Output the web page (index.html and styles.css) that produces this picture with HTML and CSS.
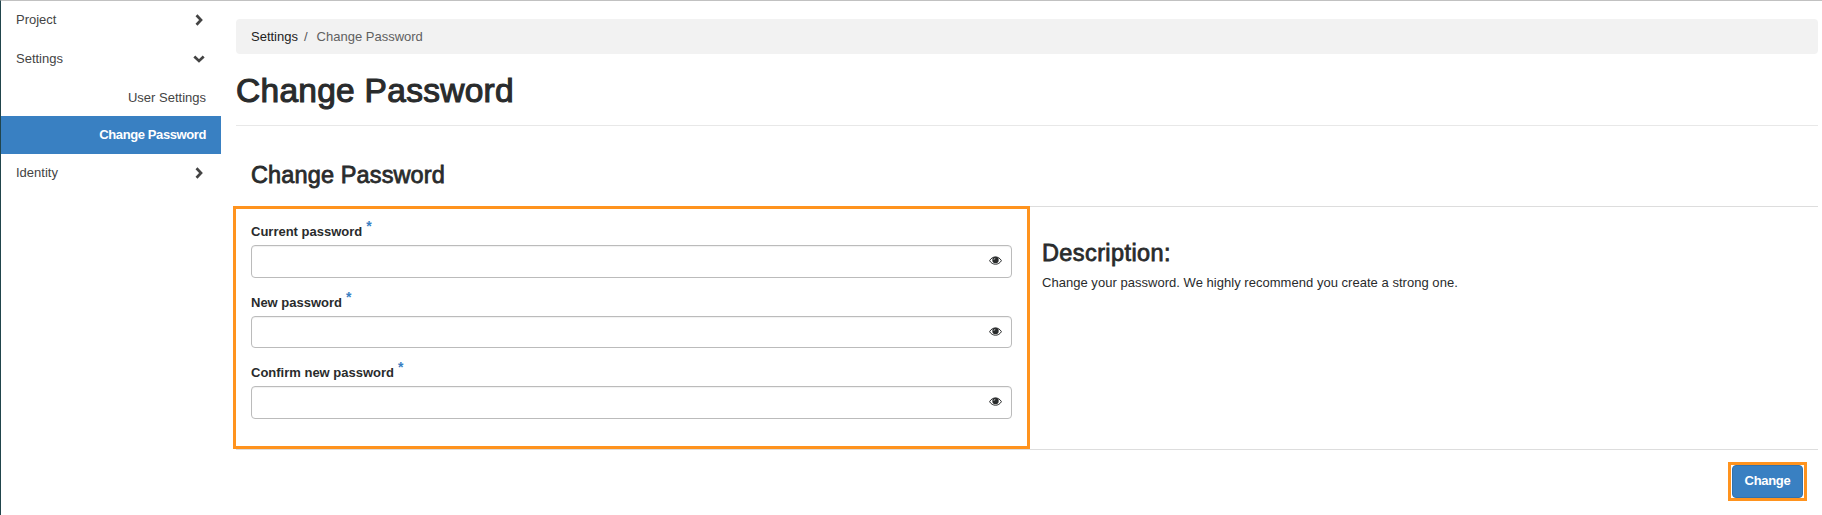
FILE: index.html
```html
<!DOCTYPE html>
<html lang="en">
<head>
<meta charset="utf-8">
<title>Change Password</title>
<link rel="stylesheet" href="styles.css">
</head>
<body>
<svg class="defs" aria-hidden="true">
  <symbol id="chevron" viewBox="0 0 8 12"><path d="M1.5 1.3 6 6 1.5 10.7" fill="none" stroke="currentColor" stroke-width="2.7"/></symbol>
  <symbol id="eye" viewBox="0 0 13 9"><path d="M.6 4.7C3.2-.3 9.8-.3 12.4 4.7 9.8 9.4 3.2 9.4 .6 4.7Z" fill="none" stroke="currentColor"/><circle cx="6.5" cy="4" r="3.2" fill="currentColor"/><path d="M4.9 3.8Q5 2.4 6.3 2.3" fill="none" stroke="#fff" stroke-width=".6"/></symbol>
</svg>
<div class="app">
  <nav class="sidebar">
    <a class="group">Project<svg class="chevron"><use href="#chevron"/></svg></a>
    <a class="group">Settings<svg class="chevron open"><use href="#chevron"/></svg></a>
    <a class="item">User Settings</a>
    <a class="item active">Change Password</a>
    <a class="group last">Identity<svg class="chevron"><use href="#chevron"/></svg></a>
  </nav>
  <main class="content">
    <div class="breadcrumb"><span>Settings</span><span class="slash">/</span><span class="current">Change Password</span></div>
    <h1 class="page-title">Change Password</h1>
    <h2 class="form-title">Change Password</h2>
    <div class="form-body">
      <form class="fields">
        <label class="label">Current password<span class="required">*</span></label>
        <div class="input"><svg class="eye"><use href="#eye"/></svg></div>
        <label class="label">New password<span class="required">*</span></label>
        <div class="input short"><svg class="eye"><use href="#eye"/></svg></div>
        <label class="label">Confirm new password<span class="required">*</span></label>
        <div class="input"><svg class="eye"><use href="#eye"/></svg></div>
      </form>
      <section class="description">
        <h3 class="description-title">Description:</h3>
        <p class="description-text">Change your password. We highly recommend you create a strong one.</p>
      </section>
    </div>
    <div class="footer"><div class="highlight"><button class="button">Change</button></div></div>
  </main>
</div>
</body>
</html>
```
FILE: styles.css
```css
* { box-sizing: border-box; }
body {
  margin: 0;
  background: #fff;
  color: #292b2c;
  font: 13px/18px "Liberation Sans", Arial, sans-serif;
  overflow: hidden;
}
h1, h2, h3, p { margin: 0; }
.defs { position: absolute; width: 0; height: 0; }
.app {
  display: flex;
  height: 515px;
  border-top: 1px solid #c1c1c1;
  border-left: 1px solid #21454c;
}
.sidebar { width: 220px; flex: none; color: #444; }
.group {
  display: flex;
  align-items: center;
  justify-content: space-between;
  height: 39px;
  padding: 0 18px 2px 15px;
}
.group.last { height: 37px; padding-bottom: 0; }
.item {
  display: flex;
  align-items: center;
  justify-content: flex-end;
  height: 37px;
  padding-right: 15px;
}
.item.active {
  height: 38px;
  background: #3980c2;
  color: #fff;
  font-weight: bold;
  letter-spacing: -.4px;
}
.chevron { width: 8px; height: 12px; margin-top: 1px; }
.chevron.open { transform: rotate(90deg); }
.content { width: 1582px; margin-left: 15px; padding-top: 18px; }
.breadcrumb {
  display: flex;
  height: 35px;
  padding: 9px 15px;
  border-radius: 4px;
  background: #f2f2f2;
  color: #222;
}
.slash { margin: 0 9px 0 6px; color: #555; }
.current { color: #606060; }
.page-title {
  height: 72px;
  padding-top: 17px;
  border-bottom: 1px solid #e8e8e8;
  font-size: 33.5px;
  line-height: 40px;
  font-weight: 400;
  letter-spacing: .28px;
  -webkit-text-stroke: 1.1px currentColor;
}
.form-title {
  height: 80px;
  padding: 35px 15px 0;
  font-size: 23.5px;
  line-height: 28px;
  font-weight: 400;
  letter-spacing: .13px;
  -webkit-text-stroke: .8px currentColor;
}
.form-body {
  display: flex;
  height: 244px;
  border-top: 1px solid #ddd;
  border-bottom: 1px solid #ddd;
}
.fields {
  width: 797px;
  height: 243px;
  flex: none;
  margin: -1px 0 0 -3px;
  padding: 13px 15px;
  border: 3px solid #ff931e;
}
.label { display: block; height: 23px; padding-top: 1px; font-weight: bold; }
.required {
  margin-left: 4px;
  color: #3980c2;
  font-size: 14px;
  line-height: 1;
  position: relative;
  top: -5px;
}
.input {
  display: flex;
  align-items: center;
  justify-content: flex-end;
  height: 33px;
  margin-bottom: 15px;
  padding: 0 9px 2px 0;
  border: 1px solid #bbb;
  border-radius: 4px;
  box-shadow: inset 0 1px 1px rgba(0,0,0,.06);
}
.input.short { height: 32px; }
.eye { width: 13px; height: 9px; }
.description { padding: 32px 0 0 12px; }
.description-title {
  height: 35px;
  font-size: 23.5px;
  line-height: 28px;
  font-weight: 400;
  letter-spacing: .4px;
  -webkit-text-stroke: .8px currentColor;
}
.description-text { letter-spacing: .03px; }
.footer { display: flex; justify-content: flex-end; padding: 12px 11px 0 0; }
.highlight { width: 79px; height: 39px; border: 3px solid #ff931e; padding: 0 1px; }
.button {
  display: block;
  width: 71px;
  height: 33px;
  padding: 0 0 2px;
  border: 1px solid #3272ad;
  border-radius: 4px;
  background: #3980c2;
  color: #fff;
  font: bold 13px "Liberation Sans", Arial, sans-serif;
  letter-spacing: -.3px;
}
```
